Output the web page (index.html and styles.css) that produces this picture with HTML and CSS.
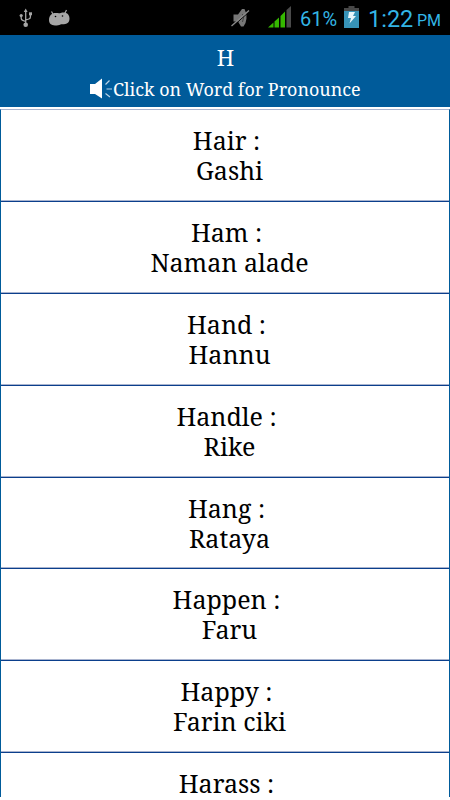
FILE: index.html
```
<!DOCTYPE html>
<html lang="en">
<head>
  <meta charset="UTF-8">
  <meta name="viewport" content="width=device-width, initial-scale=1.0">
  <title>Words - H</title>
  <link rel="stylesheet" href="styles.css">
</head>
<body>
  <div class="status-bar">
    <svg class="usb" width="14" height="20" viewBox="0 0 14 20" fill="none" stroke="#a6a6a6" stroke-width="1.3">
      <path d="M6.7 3v13M2.2 8v2.3q0 1.5 1.5 2l3 1.2M11.4 6.5V9q0 1.5-1.5 2l-3.2 1"/>
      <path d="M6.7.5L8.6 4H4.8z" fill="#a6a6a6" stroke="none"/>
      <circle cx="6.7" cy="16.7" r="2.3" fill="#a6a6a6" stroke="none"/>
      <circle cx="2.2" cy="7.5" r="1.6" fill="#a6a6a6" stroke="none"/>
      <path d="M10 4.3h3v3h-3z" fill="#a6a6a6" stroke="none"/>
    </svg>
    <svg class="android" width="22" height="18" viewBox="0 0 22 18" fill="#a6a6a6">
      <path d="M2.5 2.5l2 3.500M17.500 1l-2 4" stroke="#a6a6a6" stroke-width="1.2"/>
      <path d="M0 11C0 6.500 3 4 6.500 4c1.500 0 2.500.2 3.500.2S13 3.200 15.500 3.500c3.300.4 5 3 5 6 0 3.700-2.200 5.700-5.500 5.700-1.500 0-2.500-.2-3.500.2-1.500.7-3 1-5.500 1-4 0-6-1.900-6-5.400z"/>
      <circle cx="6.500" cy="7.500" r=".8" fill="#000"/>
      <circle cx="13.500" cy="7" r=".8" fill="#000"/>
    </svg>
    <svg class="mute" width="20" height="20" viewBox="0 0 20 20">
      <path d="M2.500 6.500H7L11 1h2.500q2.500 4.500 2 9.500t-3 8H10L7 13.500H2.500z" fill="#777"/>
      <path d="M11.500 6q2 3.500 0 8" fill="none" stroke="#444"/>
      <path d="M1 19L18.500 3.500" stroke="#000"/>
      <path d="M.5 18L18 2.500" stroke="#8a8a8a" stroke-width="1.4"/>
    </svg>
    <svg class="signal" width="24" height="22" viewBox="0 0 24 22">
      <path d="M0 21.500L5.500 16.500v5zM6.500 15.500l4.500-4v10H6.500zM12.500 10L17 5.500v16h-4.500z" fill="#35b800"/>
      <path d="M18.500 4L23 0v21.500h-4.500z" fill="#4a4a4a"/>
    </svg>
    <span class="percent">61%</span>
    <svg class="battery" width="15" height="22" viewBox="0 0 15 22">
      <path d="M4.500 0h6v2H15v3H0V2h4.500z" fill="#484848"/>
      <path d="M0 5h15v17H0z" fill="#3793b8"/>
      <path d="M5 6h6L9 10h3L5.500 17.500 7 12H4z" fill="#e9f6fb"/>
    </svg>
    <span class="clock">1:22</span>
    <span class="meridiem">PM</span>
  </div>

  <header class="header">
    <h1 class="title">H</h1>
    <div class="hint">
      <svg class="speaker" width="23" height="22" viewBox="0 0 23 22">
        <path d="M0 6h5l7-5.500v20L5 16H0z" fill="#fff"/>
        <path d="M15.500 6.500l4-4M16.500 11H22M15.500 15.500l4.500 3.500" stroke="#b9d2e5" stroke-width="1.2"/>
      </svg>
      <span class="hint-text">Click on Word for Pronounce</span>
    </div>
  </header>

  <ul class="word-list">
    <li class="word">Hair :<span class="meaning">Gashi</span></li>
    <li class="word">Ham :<span class="meaning">Naman alade</span></li>
    <li class="word">Hand :<span class="meaning">Hannu</span></li>
    <li class="word">Handle :<span class="meaning">Rike</span></li>
    <li class="word">Hang :<span class="meaning">Rataya</span></li>
    <li class="word">Happen :<span class="meaning">Faru</span></li>
    <li class="word">Happy :<span class="meaning">Farin ciki</span></li>
    <li class="word">Harass :</li>
  </ul>
</body>
</html>
```
FILE: styles.css
```
* {
  margin: 0;
  padding: 0;
  box-sizing: border-box;
}

body {
  height: 800px;
  overflow: hidden;
  background: #fff;
  color: #000;
  font-family: "Noto Serif", "Droid Serif", "DejaVu Serif Condensed", "DejaVu Serif", serif;
}

/* Phone status bar */
.status-bar {
  display: flex;
  height: 35px;
  padding-left: 19px;
  background: #000;
  color: #33b5e5;
  font-family: Roboto, sans-serif;
  line-height: 38px;
  white-space: nowrap;
}

.status-bar svg {
  flex: none;
}

.usb {
  margin-top: 8px;
}

.android {
  margin: 9px 0 0 16px;
}

.mute {
  margin: 8px 0 0 160px;
}

.signal {
  margin: 6px 0 0 17px;
}

.percent {
  width: 37px;
  margin-left: 8px;
  font-size: 20px;
}

.battery {
  margin: 6px 0 0 7px;
}

.clock {
  width: 44px;
  margin-left: 9px;
  font-size: 23.5px;
}

.meridiem {
  margin-left: 5px;
  font-size: 16px;
  line-height: 41px;
}

/* Header */
.header {
  height: 72px;
  padding-top: 8px;
  background: #005b9a;
  color: #fff;
  text-align: center;
}

.title {
  padding-left: 1px;
  font-size: 22px;
  font-weight: normal;
  line-height: 28px;
}

.hint {
  display: flex;
  padding-left: 90px;
  font-size: 17.92px;
  line-height: 36px;
  white-space: nowrap;
}

.speaker {
  margin-top: 7px;
}

/* Word list */
.word-list {
  height: 688px;
  margin-top: 2px;
  border: 1px solid #005b9a;
  border-top-color: #a9b4cf;
  border-bottom: 0;
  overflow: hidden;
  list-style: none;
}

.word {
  height: 91.9px;
  padding: 15px 0 0 3px;
  border-bottom: 1px solid #0b3f8c;
  box-shadow: inset 0 -1px #a9b4cf;
  font-size: 25px;
  line-height: 30px;
  text-align: center;
}

.meaning {
  display: block;
  padding-left: 6px;
}
```
